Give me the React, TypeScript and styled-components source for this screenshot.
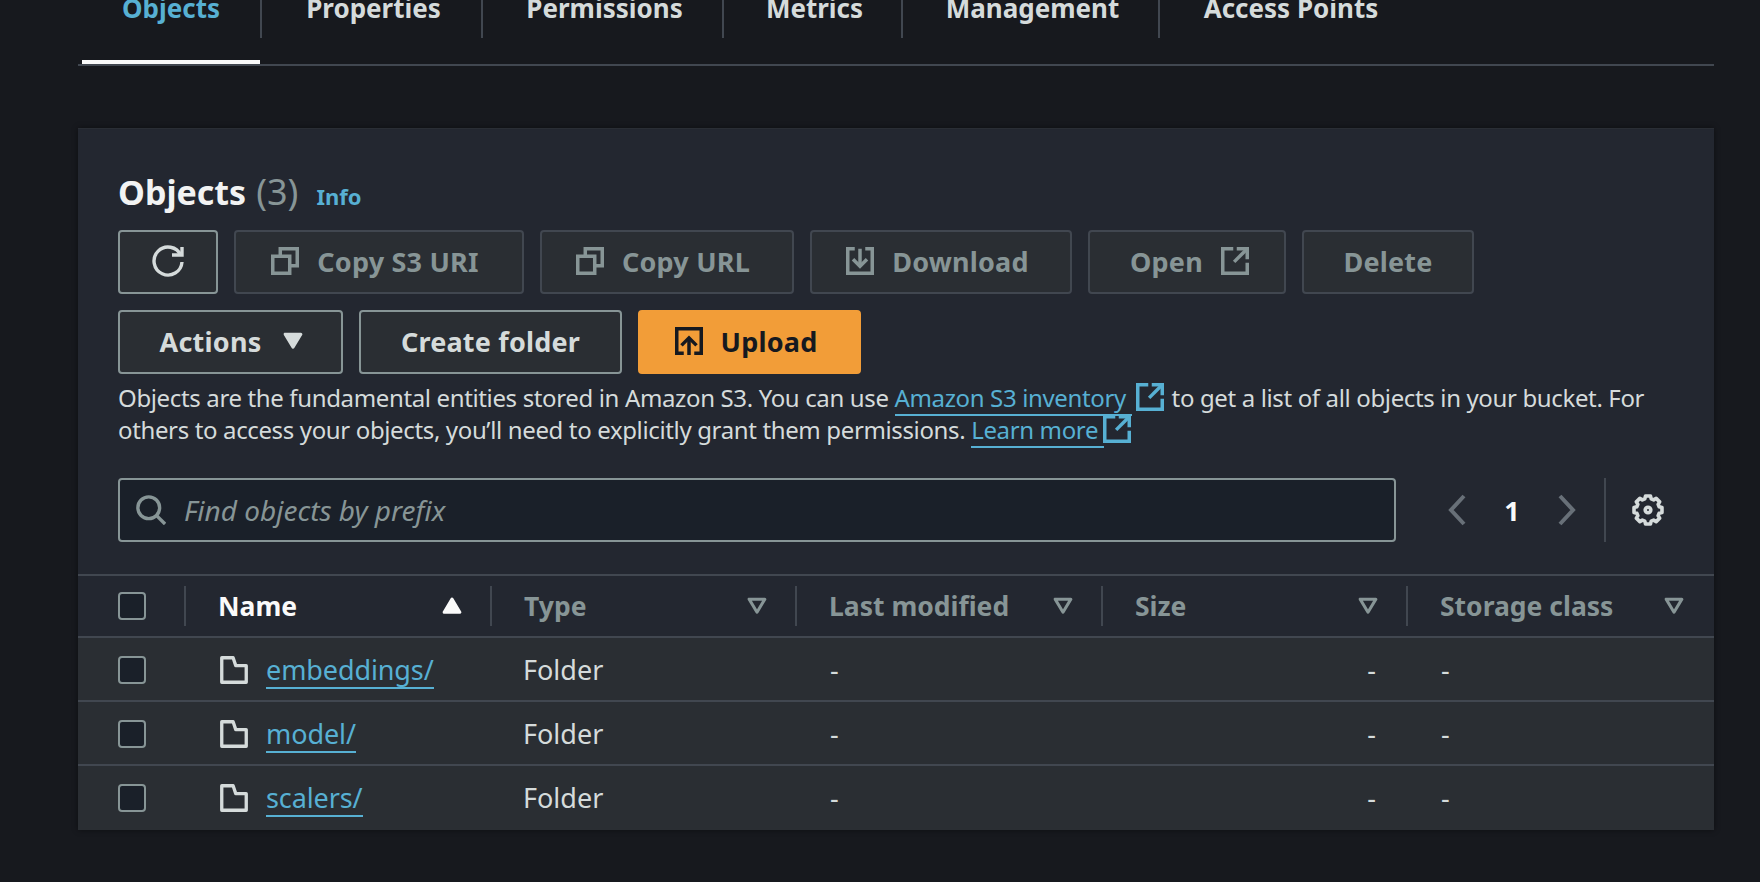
import React from "react";
import styled, { createGlobalStyle } from "styled-components";

const Global = createGlobalStyle`
  html, body { margin: 0; padding: 0; height: 100%; background: #17191e; overflow: hidden; }
  * { box-sizing: border-box; }
  #root { font-family: "Noto Sans", "Open Sans", sans-serif; color: #d5dbdb; }
`;
const Page = styled.div`
  height: 882px; overflow: hidden; padding: 0 46px 0 78px; background: #17191e;
`;
const Tabs = styled.div`
  display: flex; height: 66px; padding-left: 4px; border-bottom: 2px solid #414750; margin-bottom: 62px;
`;
const Tab = styled.div<{ $active?: boolean; $w: number }>`
  width: ${(p) => p.$w}px; height: 64px; position: relative; font-size: 26px; font-weight: 700; line-height: 36px;
  display: flex; justify-content: center; color: ${(p) => (p.$active ? "#57b0d3" : "#d5dbdb")};
  padding-left: ${(p) => (p.$active ? 0 : 6)}px;
  border-bottom: 4px solid ${(p) => (p.$active ? "#fafafa" : "transparent")};
  span { margin-top: -10px; height: 36px; }
  &:not(:last-child)::after { content: ""; position: absolute; right: -2px; top: 0; height: 38px; width: 2px; background: #414750; }
`;
const Panel = styled.section`
  background: #232730; border-top: 1px solid #2a2e35; box-shadow: 0 0 6px rgba(0,0,0,.45); height: 702px;
`;
const PanelHead = styled.div`padding: 40px 40px 0 40px;`;
const Title = styled.h2`
  margin: 0; display: flex; align-items: baseline; height: 46px; font-size: 34px; line-height: 46px; font-weight: 700; color: #f2f3f3;
  em { font-style: normal; font-weight: 400; font-size: 36px; color: #879596; margin-left: 10px; }
  a { font-size: 22px; font-weight: 700; color: #57b0d3; margin-left: 18px; }
`;
const BtnRow = styled.div`display: flex; gap: 16px; margin-top: 16px; &:first-of-type { margin-top: 15px; }`;
const Btn = styled.button<{ $w: number; $kind?: "disabled" | "primary" | "normal"; $gap?: number; $shift?: number }>`
  width: ${(p) => p.$w}px; height: 64px; border-radius: 4px; font: 700 27px "Noto Sans", sans-serif; letter-spacing: 0.2px;
  display: flex; align-items: center; justify-content: center; gap: ${(p) => p.$gap ?? 18}px;
  padding: 0 ${(p) => (p.$shift && p.$shift < 0 ? -p.$shift : 0)}px 2px ${(p) => (p.$shift && p.$shift > 0 ? p.$shift : 0)}px;
  background: ${(p) => (p.$kind === "primary" ? "#f29d38" : "#2a2e33")};
  border: 2px solid ${(p) => (p.$kind === "primary" ? "#f29d38" : p.$kind === "disabled" ? "#414750" : "#879596")};
  color: ${(p) => (p.$kind === "primary" ? "#16191f" : p.$kind === "disabled" ? "#879596" : "#d5dbdb")};
`;
const Icon = styled.svg<{ $s?: number; $sw?: number }>`
  width: ${(p) => p.$s ?? 28}px; height: ${(p) => p.$s ?? 28}px; flex: none; fill: none; stroke: currentColor;
  stroke-width: ${(p) => p.$sw ?? 2};
`;
const Desc = styled.p`
  margin: 8px 0 0; font-size: 24px; line-height: 32px; color: #d5dbdb; letter-spacing: -0.36px;
`;
const Link = styled.a`
  color: #57b0d3; border-bottom: 2px solid #57b0d3;
`;
const ExtIcon = styled(Icon)<{ $l: number; $r: number }>`
  color: #57b0d3; vertical-align: -4px; margin: 0 ${(p) => p.$r}px 0 ${(p) => p.$l}px;
`;
const Tools = styled.div`
  display: flex; align-items: center; margin-top: 32px; height: 64px;
`;
const Search = styled.div`
  width: 1278px; height: 64px; border: 2px solid #879596; border-radius: 4px; background: #1a2029;
  display: flex; align-items: center; padding-left: 16px; gap: 18px; color: #879596;
  font-size: 28px; font-style: italic;
`;
const Pager = styled.div`
  display: flex; align-items: center; height: 64px; margin-left: 44px; color: #687078;
  b { font-size: 27px; color: #fafafa; width: 80px; text-align: center; font-weight: 700; }
`;
const Divider = styled.div`width: 2px; height: 64px; background: #414750; margin: 0 26px 0 20px;`;
const Gear = styled(Icon)`color: #d5dbdb;`;
const Grid = "106px 306px 305px 306px 305px 308px";
const Table = styled.div`margin-top: 32px;`;
const Head = styled.div`
  display: grid; grid-template-columns: ${Grid}; height: 64px; align-items: center;
  border-top: 2px solid #414750; border-bottom: 2px solid #414750;
`;
const HCell = styled.div<{ $active?: boolean; $first?: boolean }>`
  height: 40px; display: flex; align-items: center; justify-content: space-between;
  font-size: 26.500px; font-weight: 700; padding: 0 ${(p) => (p.$first ? "0 0 40px" : "28px 0 32px")};
  color: ${(p) => (p.$active ? "#fafafa" : "#879596")};
  ${(p) => (p.$first ? "" : "border-left: 2px solid #414750;")}
  &:last-child { padding-right: 30px; }
`;
const Check = styled.div`
  width: 28px; height: 28px; border: 2px solid #879596; border-radius: 4px; background: #1a2029;
`;
const Row = styled.div`
  display: grid; grid-template-columns: ${Grid}; height: 64px; align-items: center;
  background: #2a2e33; box-shadow: inset 0 -2px 0 #414750; font-size: 27px;
  &:last-child { box-shadow: none; }
`;
const Cell = styled.div<{ $pad?: number; $right?: boolean; $text?: boolean }>`
  padding-left: ${(p) => p.$pad ?? 33}px; display: flex; align-items: center;
  ${(p) => (p.$text ? "padding-bottom: 2px;" : "")}
  ${(p) => (p.$right ? "justify-content: flex-end; padding-right: 30px;" : "")}
`;
const FolderLink = styled(Link)`margin: 2px 0 0 18px; line-height: 34px; letter-spacing: -0.1px;`;

const gearPoints = (() => {
  const pts: string[] = [];
  for (let i = 0; i < 8; i++) {
    const a = (i * 45 * Math.PI) / 180;
    const step = (d: number, r: number) => {
      const t = a + (d * Math.PI) / 180;
      pts.push(`${(8 + r * Math.sin(t)).toFixed(2)},${(8 - r * Math.cos(t)).toFixed(2)}`);
    };
    step(-10, 7.1); step(10, 7.1); step(16, 5.8); step(29, 5.8);
  }
  return pts.join(" ");
})();

const Copy = () => <Icon viewBox="0 0 16 16"><path d="M1 5.300h9.700V15H1z" /><path d="M5.300 5.300V1H15v9.700h-4.300" /></Icon>;
const ExtPaths = () => <><path d="M7 1H1v14h14V9" /><path d="M9 1h6v6" /><path d="M15 1L7.500 8.500" /></>;
const Caret = ({ up, solid }: { up?: boolean; solid?: boolean }) => (
  <Icon $s={20} $sw={2.400} viewBox="0 0 16 16" style={{ fill: solid ? "currentColor" : "none" }}>
    <path d={up ? "M8 2.500l6.300 10.500H1.700z" : "M1.700 2.500h12.600L8 13z"} strokeLinejoin="round" />
  </Icon>
);
const Folder = () => <Icon $sw={1.900} viewBox="0 0 16 16"><path d="M1 15V1h6.500l1.500 4.500h6V15z" strokeLinejoin="round" /></Icon>;

const cols = ["Type", "Last modified", "Size", "Storage class"];
const rows = ["embeddings/", "model/", "scalers/"];

export default function App() {
  return (
    <Page>
      <Global />
      <Tabs>
        <Tab $active $w={178}><span>Objects</span></Tab>
        <Tab $w={221}><span>Properties</span></Tab>
        <Tab $w={241}><span>Permissions</span></Tab>
        <Tab $w={179}><span>Metrics</span></Tab>
        <Tab $w={257}><span>Management</span></Tab>
        <Tab $w={260}><span>Access Points</span></Tab>
      </Tabs>
      <Panel>
        <PanelHead>
          <Title>Objects<em>(3)</em><a>Info</a></Title>
          <BtnRow>
            <Btn $w={100}><Icon $s={32} $sw={1.700} viewBox="0 0 16 16"><path d="M10 5h5V1" /><path d="M15 8.500a7 7 0 1 1-.6-3.350" /></Icon></Btn>
            <Btn $w={290} $kind="disabled" $shift={-8}><Copy />Copy S3 URI</Btn>
            <Btn $w={254} $kind="disabled" $shift={-8}><Copy />Copy URL</Btn>
            <Btn $w={262} $kind="disabled" $shift={-7}><Icon viewBox="0 0 16 16"><path d="M5 1H1v14h14V1h-4" /><path d="M8 1v10" /><path d="M4 7l4 4 4-4" /></Icon>Download</Btn>
            <Btn $w={198} $kind="disabled" $shift={5}>Open<Icon viewBox="0 0 16 16"><ExtPaths /></Icon></Btn>
            <Btn $w={172} $kind="disabled">Delete</Btn>
          </BtnRow>
          <BtnRow>
            <Btn $w={225} $gap={22} $shift={2}>Actions<Caret solid /></Btn>
            <Btn $w={263}>Create folder</Btn>
            <Btn $w={223} $kind="primary" $shift={-7}><Icon viewBox="0 0 16 16"><path d="M5 15H1V1h14v14h-4" /><path d="M8 16V6.500" /><path d="M3.700 10.500L8 6.200l4.300 4.300" /></Icon>Upload</Btn>
          </BtnRow>
          <Desc>
            Objects are the fundamental entities stored in Amazon S3. You can use <Link>Amazon S3 inventory&nbsp;</Link><ExtIcon $l={4} $r={2} viewBox="0 0 16 16"><ExtPaths /></ExtIcon> to get a list of all objects in your bucket. For others to access your objects, you’ll need to explicitly grant them permissions. <Link>Learn more&nbsp;</Link><ExtIcon $l={-1} $r={0} viewBox="0 0 16 16"><ExtPaths /></ExtIcon>
          </Desc>
          <Tools>
            <Search>
              <Icon $s={30} $sw={1.800} viewBox="0 0 16 16"><circle cx="6.800" cy="6.800" r="5.800" /><path d="M15.500 15.500l-4.900-4.900" /></Icon>
              Find objects by prefix
            </Search>
            <Pager>
              <Icon $s={32} viewBox="0 0 16 16"><path d="M12 1L5.500 8l6.500 7" /></Icon>
              <b>1</b>
              <Icon $s={32} viewBox="0 0 16 16"><path d="M4 1l6.500 7L4 15" /></Icon>
              <Divider />
              <Gear $s={32} $sw={1.800} viewBox="0 0 16 16"><circle cx="8" cy="8" r="1.400" /><polygon points={gearPoints} strokeLinejoin="round" /></Gear>
            </Pager>
          </Tools>
        </PanelHead>
        <Table>
          <Head>
            <HCell $first><Check /></HCell>
            <HCell $active>Name<Caret up solid /></HCell>
            {cols.map((c) => <HCell key={c}>{c}<Caret /></HCell>)}
          </Head>
          {rows.map((r) => (
            <Row key={r}>
              <Cell $pad={40}><Check /></Cell>
              <Cell $pad={36}><Folder /><FolderLink>{r}</FolderLink></Cell>
              <Cell $text>Folder</Cell>
              <Cell $text $pad={35}>-</Cell>
              <Cell $text $right>-</Cell>
              <Cell $text $pad={35}>-</Cell>
            </Row>
          ))}
        </Table>
      </Panel>
    </Page>
  );
}
